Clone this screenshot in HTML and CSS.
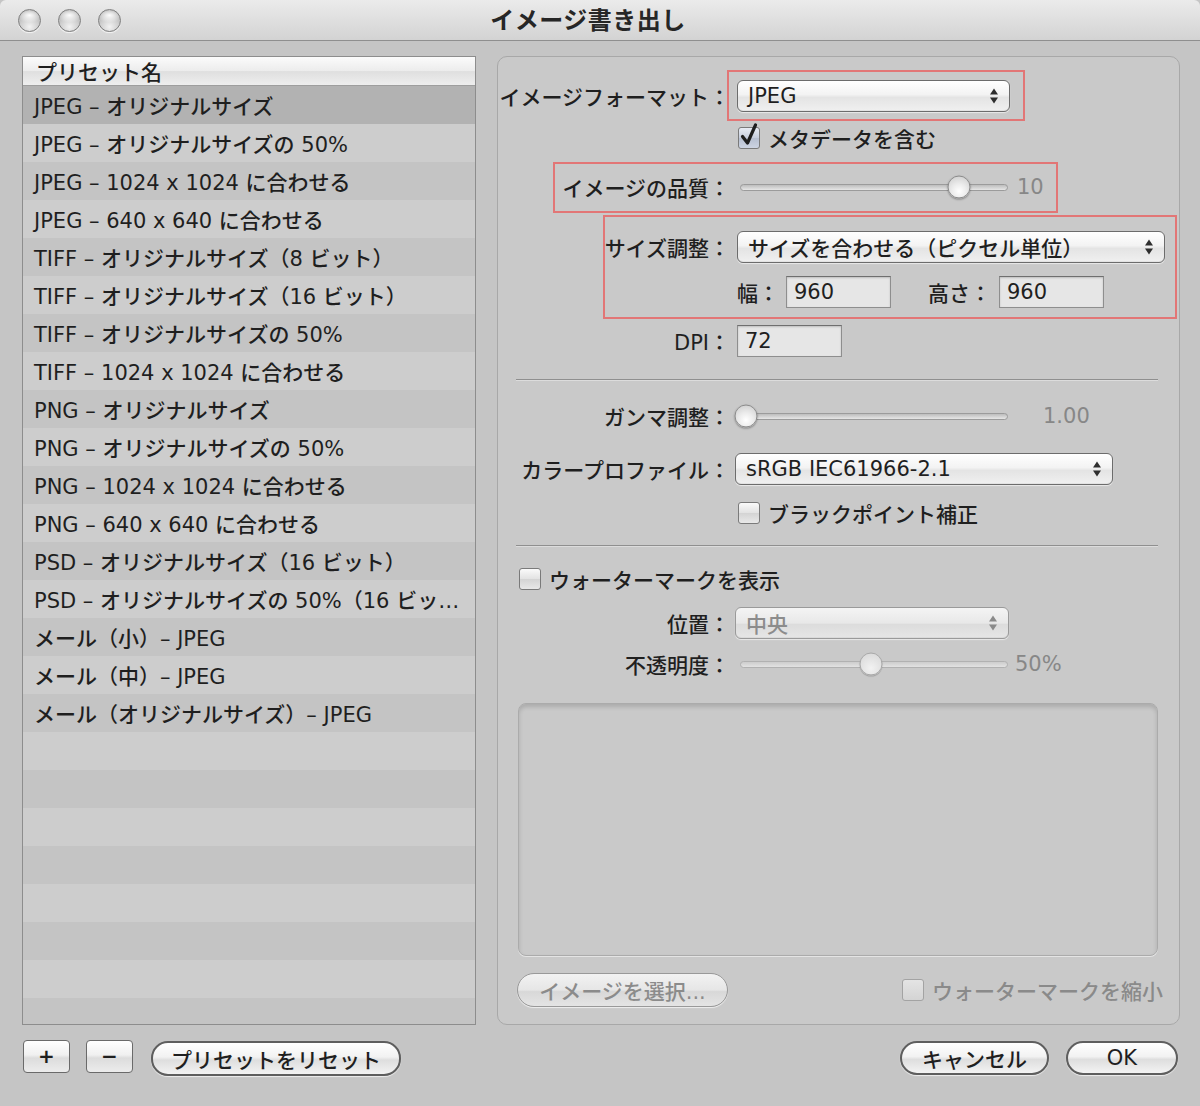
FILE: index.html
```html
<!DOCTYPE html>
<html lang="ja">
<head>
<meta charset="utf-8">
<title>イメージ書き出し</title>
<link rel="stylesheet" href="styles.css">
</head>
<body>
<div class="window">
  <div class="titlebar">
    <div class="lights"><span class="light"></span><span class="light"></span><span class="light"></span></div>
    <div class="title">イメージ書き出し</div>
    <div></div>
  </div>
  <div class="content">
    <div class="main">
      <div class="list">
        <div class="list-header">プリセット名</div>
        <div class="list-rows">
          <div class="item selected">JPEG – オリジナルサイズ</div>
          <div class="item">JPEG – オリジナルサイズの 50%</div>
          <div class="item">JPEG – 1024 x 1024 に合わせる</div>
          <div class="item">JPEG – 640 x 640 に合わせる</div>
          <div class="item">TIFF – オリジナルサイズ（8 ビット）</div>
          <div class="item">TIFF – オリジナルサイズ（16 ビット）</div>
          <div class="item">TIFF – オリジナルサイズの 50%</div>
          <div class="item">TIFF – 1024 x 1024 に合わせる</div>
          <div class="item">PNG – オリジナルサイズ</div>
          <div class="item">PNG – オリジナルサイズの 50%</div>
          <div class="item">PNG – 1024 x 1024 に合わせる</div>
          <div class="item">PNG – 640 x 640 に合わせる</div>
          <div class="item">PSD – オリジナルサイズ（16 ビット）</div>
          <div class="item">PSD – オリジナルサイズの 50%（16 ビッ…</div>
          <div class="item">メール（小）– JPEG</div>
          <div class="item">メール（中）– JPEG</div>
          <div class="item">メール（オリジナルサイズ）– JPEG</div>
          <div class="item"></div>
          <div class="item"></div>
          <div class="item"></div>
          <div class="item"></div>
          <div class="item"></div>
          <div class="item"></div>
          <div class="item"></div>
          <div class="item"></div>
        </div>
      </div>

      <div class="panel">
        <div class="annot annot-format"></div>
        <div class="annot annot-quality"></div>
        <div class="annot annot-size"></div>

        <div class="row r-format">
          <span class="lbl">イメージフォーマット：</span>
          <div class="popup w-format"><span>JPEG</span>
            <svg class="arrows" width="10" height="18" viewBox="0 0 10 18"><path d="M5 1.5 L9 7.5 H1 Z M5 16.5 L9 10.5 H1 Z" fill="#2e2e2e"/></svg>
          </div>
        </div>

        <div class="row r-meta">
          <span class="lbl"></span>
          <span class="check on"><svg class="tick" width="22" height="26" viewBox="0 0 22 26"><path d="M4.5 14.5 L9.5 21 L17.5 3" stroke="#1e1e1e" stroke-width="3.2" fill="none" stroke-linecap="round" stroke-linejoin="round"/></svg></span>
          <span class="check-label">メタデータを含む</span>
        </div>

        <div class="row r-quality">
          <span class="lbl">イメージの品質：</span>
          <div class="slider"><span class="knob" style="left:82%"></span></div>
          <span class="value v-quality">10</span>
        </div>

        <div class="row r-size">
          <span class="lbl">サイズ調整：</span>
          <div class="popup w-size"><span>サイズを合わせる（ピクセル単位）</span>
            <svg class="arrows" width="10" height="18" viewBox="0 0 10 18"><path d="M5 1.5 L9 7.5 H1 Z M5 16.5 L9 10.5 H1 Z" fill="#2e2e2e"/></svg>
          </div>
        </div>

        <div class="row r-wh">
          <span class="lbl"></span>
          <span class="sub-lbl">幅：</span>
          <div class="field">960</div>
          <span class="sub-lbl sub-h">高さ：</span>
          <div class="field">960</div>
        </div>

        <div class="row r-dpi">
          <span class="lbl">DPI：</span>
          <div class="field">72</div>
        </div>

        <div class="sep sep-1"></div>

        <div class="row r-gamma">
          <span class="lbl">ガンマ調整：</span>
          <div class="slider"><span class="knob" style="left:2%"></span></div>
          <span class="value v-gamma">1.00</span>
        </div>

        <div class="row r-profile">
          <span class="lbl">カラープロファイル：</span>
          <div class="popup w-profile"><span>sRGB IEC61966-2.1</span>
            <svg class="arrows" width="10" height="18" viewBox="0 0 10 18"><path d="M5 1.5 L9 7.5 H1 Z M5 16.5 L9 10.5 H1 Z" fill="#2e2e2e"/></svg>
          </div>
        </div>

        <div class="row r-bp">
          <span class="lbl"></span>
          <span class="check"></span>
          <span class="check-label">ブラックポイント補正</span>
        </div>

        <div class="sep sep-2"></div>

        <div class="row r-wm">
          <span class="check"></span>
          <span class="check-label">ウォーターマークを表示</span>
        </div>

        <div class="row r-pos">
          <span class="lbl">位置：</span>
          <div class="popup w-pos disabled"><span>中央</span>
            <svg class="arrows" width="10" height="18" viewBox="0 0 10 18"><path d="M5 1.5 L9 7.5 H1 Z M5 16.5 L9 10.5 H1 Z" fill="#8a8a8a"/></svg>
          </div>
        </div>

        <div class="row r-opacity">
          <span class="lbl">不透明度：</span>
          <div class="slider disabled"><span class="knob" style="left:49%"></span></div>
          <span class="value v-opacity">50%</span>
        </div>

        <div class="preview"></div>

        <div class="row r-bottom">
          <button class="pill pill-disabled choose">イメージを選択...</button>
          <span class="spacer"></span>
          <span class="check disabled"></span>
          <span class="check-label muted">ウォーターマークを縮小</span>
        </div>
      </div>
    </div>

    <div class="footer">
      <button class="sq-btn">+</button>
      <button class="sq-btn minus">−</button>
      <button class="pill reset">プリセットをリセット</button>
      <span class="spacer"></span>
      <button class="pill cancel">キャンセル</button>
      <button class="pill ok">OK</button>
    </div>
  </div>
</div>
</body>
</html>
```

FILE: styles.css
```css
* { box-sizing: border-box; }

body {
  margin: 0;
  width: 1200px;
  height: 1106px;
  overflow: hidden;
  background: #c4c4c4;
  font-family: "DejaVu Sans", "Noto Sans CJK JP", sans-serif;
  font-size: 21px;
  font-weight: 500;
  color: #1f1f1f;
}

.window {
  width: 1200px;
  height: 1106px;
  background: #c5c5c5;
}

/* ---------- title bar ---------- */
.titlebar {
  height: 41px;
  display: grid;
  grid-template-columns: 1fr auto 1fr;
  align-items: center;
  background: linear-gradient(#ebebeb, #d3d3d3);
  border-bottom: 1px solid #8f8f8f;
  border-radius: 6px 6px 0 0;
}

.lights {
  display: flex;
  gap: 17px;
  padding-left: 18px;
  padding-top: 1px;
}

.light {
  width: 23px;
  height: 23px;
  border-radius: 50%;
  border: 1px solid #7f7f7f;
  background:
    radial-gradient(ellipse 60% 35% at 50% 25%, rgba(255,255,255,0.95), rgba(255,255,255,0) 100%),
    radial-gradient(circle at 50% 80%, #f2f2f2 0, #cfcfcf 45%, #9a9a9a 100%);
  box-shadow: 0 1px 1px rgba(255,255,255,0.7);
}

.title {
  font-family: "Noto Sans CJK JP", sans-serif;
  font-size: 24px;
  font-weight: 700;
  color: #262626;
  padding-right: 24px;
  padding-bottom: 4px;
  letter-spacing: 0.5px;
}

/* ---------- content ---------- */
.content {
  padding: 15px 20px 0 22px;
}

.main {
  display: flex;
  gap: 21px;
  height: 969px;
}

/* ---------- preset list ---------- */
.list {
  width: 454px;
  height: 969px;
  border: 1px solid #8d8d8d;
  background: #c4c4c4;
  display: flex;
  flex-direction: column;
  overflow: hidden;
}

.list-header {
  height: 29px;
  flex: none;
  padding-left: 13px;
  display: flex;
  align-items: center;
  background: linear-gradient(#fbfbfb, #ececec 50%, #dfdfdf 52%, #eeeeee);
  border-bottom: 1px solid #9e9e9e;
  font-family: "Noto Sans CJK JP", sans-serif;
}

.list-rows {
  flex: 1;
  overflow: hidden;
}

.item {
  height: 38px;
  display: flex;
  align-items: center;
  padding-left: 11px;
  white-space: nowrap;
  overflow: hidden;
  background: #c4c4c4;
}

.item:nth-child(even) { background: #cdcdcd; }
.item.selected { background: #b2b2b2; }

/* ---------- right panel ---------- */
.panel {
  position: relative;
  width: 683px;
  height: 969px;
  border: 1px solid #a8a8a8;
  border-radius: 10px;
  background: #c9c9c9;
  padding-top: 23px;
  display: flex;
  flex-direction: column;
}

.annot {
  position: absolute;
  border: 2px solid #e27676;
  pointer-events: none;
}
.annot-format  { left: 229px; top: 13px;  width: 298px; height: 51px; }
.annot-quality { left: 55px;  top: 105px; width: 505px; height: 51px; }
.annot-size    { left: 105px; top: 158px; width: 574px; height: 104px; }

.row {
  display: flex;
  align-items: center;
  flex: none;
}

.lbl {
  width: 232px;
  flex: none;
  text-align: right;
  margin-right: 7px;
  white-space: nowrap;
}

.r-format  { height: 32px; }
.r-meta    { height: 28px; margin-top: 12px; }
.r-quality { height: 28px; margin-top: 21px; }
.r-size    { height: 32px; margin-top: 30px; }
.r-wh      { height: 32px; margin-top: 13px; }
.r-dpi     { height: 32px; margin-top: 17px; }
.r-gamma   { height: 28px; margin-top: 21px; }
.r-profile { height: 32px; margin-top: 23px; }
.r-bp      { height: 28px; margin-top: 14px; }
.r-wm      { height: 28px; margin-top: 18px; padding-left: 20px; }
.r-pos     { height: 32px; margin-top: 14px; }
.r-opacity { height: 28px; margin-top: 11px; }
.r-bottom  { height: 34px; margin-top: 17px; padding-left: 19px; padding-right: 16px; }

/* popup buttons */
.popup {
  height: 32px;
  display: flex;
  align-items: center;
  justify-content: space-between;
  padding: 0 10px 0 10px;
  border: 1px solid #6c6c6c;
  border-radius: 6px;
  background: linear-gradient(#ffffff, #f3f3f3 45%, #e4e4e4 55%, #f0f0f0);
  box-shadow: 0 1px 1px rgba(255,255,255,0.6), inset 0 -1px 0 rgba(0,0,0,0.05);
  white-space: nowrap;
}
.popup .arrows { flex: none; }
.w-format  { width: 273px; }
.w-size    { width: 428px; }
.w-profile { width: 378px; margin-left: -2px; }
.w-pos     { width: 274px; margin-left: -2px; }
.popup.disabled {
  color: #8c8c8c;
  border-color: #9a9a9a;
  background: linear-gradient(#f4f4f4, #e8e8e8 50%, #dcdcdc 55%, #e6e6e6);
}

/* checkboxes */
.check {
  position: relative;
  width: 22px;
  height: 22px;
  flex: none;
  border: 1px solid #7a7a7a;
  border-radius: 3px;
  background: linear-gradient(#fafafa, #e2e2e2 50%, #d4d4d4 52%, #e8e8e8);
  margin-left: 1px;
}
.check.on {
  background: linear-gradient(#e8ecf4, #c6cedd 50%, #b7c0d1 52%, #cdd4e2);
}
.check.disabled {
  border-color: #a3a3a3;
  background: linear-gradient(#e4e4e4, #d4d4d4);
}
.tick {
  position: absolute;
  left: -1px;
  top: -6px;
  overflow: visible;
}
.check-label {
  margin-left: 8px;
  white-space: nowrap;
}
.check-label.muted { color: #8a8a8a; }

/* sliders */
.slider {
  position: relative;
  width: 268px;
  height: 7px;
  flex: none;
  margin-left: 3px;
  border: 1px solid #9b9b9b;
  border-radius: 4px;
  background: linear-gradient(#bdbdbd, #e6e6e6);
}
.knob {
  position: absolute;
  top: 50%;
  width: 23px;
  height: 23px;
  border-radius: 50%;
  transform: translate(-50%, -50%);
  border: 1px solid #8c8c8c;
  background: radial-gradient(circle at 50% 70%, #ffffff 0, #ececec 40%, #c9c9c9 100%);
  box-shadow: 0 1px 2px rgba(0,0,0,0.35);
}
.slider.disabled { border-color: #b1b1b1; background: linear-gradient(#cdcdcd, #e2e2e2); }
.slider.disabled .knob { border-color: #a9a9a9; background: radial-gradient(circle at 50% 70%, #f2f2f2, #d6d6d6); box-shadow: 0 1px 1px rgba(0,0,0,0.2); }

.value { color: #878787; white-space: nowrap; }
.v-quality { margin-left: 9px; }
.v-gamma   { margin-left: 35px; }
.v-opacity { margin-left: 7px; }

/* text fields */
.field {
  width: 105px;
  height: 32px;
  flex: none;
  display: flex;
  align-items: center;
  padding-left: 7px;
  border: 1px solid #8e8e8e;
  border-top-color: #6f6f6f;
  background: #e6e6e6;
  box-shadow: inset 0 1px 2px rgba(0,0,0,0.18);
}
.sub-lbl { white-space: nowrap; margin-right: 7px; }
.sub-h { margin-left: 37px; margin-right: 8px; }

/* separators */
.sep {
  flex: none;
  height: 2px;
  margin-left: 18px;
  margin-right: 21px;
  border-top: 1px solid #8f8f8f;
  border-bottom: 1px solid #dcdcdc;
}
.sep-1 { margin-top: 22px; }
.sep-2 { margin-top: 18px; }

/* preview well */
.preview {
  flex: none;
  height: 253px;
  margin: 25px 21px 0 20px;
  border: 1px solid #ababab;
  border-radius: 8px;
  background: #c9c9c9;
  box-shadow: inset 0 3px 4px rgba(0,0,0,0.15), 0 1px 0 rgba(255,255,255,0.5);
}

.spacer { flex: 1; }

/* buttons */
button {
  font: inherit;
  color: #1f1f1f;
  cursor: default;
}

.pill {
  height: 34px;
  border: 2px solid #5e5e5e;
  border-radius: 17px;
  background: linear-gradient(#ffffff, #f2f2f2 45%, #dedede 55%, #f3f3f3);
  box-shadow: 0 1px 1px rgba(255,255,255,0.7);
  padding: 0;
  white-space: nowrap;
}
.pill-disabled {
  border: 1px solid #999999;
  color: #8b8b8b;
  background: linear-gradient(#f2f2f2, #e6e6e6 50%, #d8d8d8 55%, #e4e4e4);
}
.choose { width: 211px; }

.footer {
  display: flex;
  align-items: center;
  padding-top: 15px;
  padding-left: 1px;
  padding-right: 2px;
}

.sq-btn {
  width: 47px;
  height: 33px;
  border: 1px solid #6a6a6a;
  border-radius: 4px;
  background: linear-gradient(#ffffff, #f0f0f0 45%, #dcdcdc 55%, #ececec);
  font-family: "DejaVu Sans", sans-serif;
  font-size: 20px;
  font-weight: 700;
  line-height: 1;
  padding: 0 0 2px 0;
  align-self: flex-start;
}
.minus { margin-left: 16px; }
.reset { width: 250px; height: 35px; margin-left: 18px; align-self: flex-start; margin-top: 1px; }
.cancel { width: 149px; }
.ok { width: 112px; margin-left: 17px; }
```
